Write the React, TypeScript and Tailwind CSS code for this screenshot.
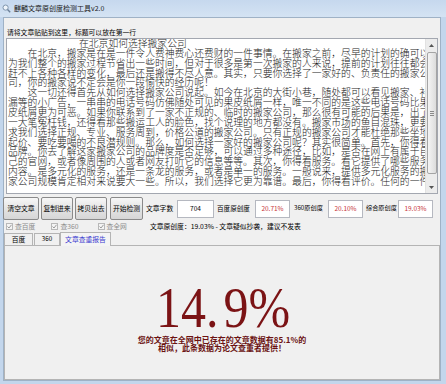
import React from "react";

const lines: string[] = [
  "　　在北京，搬家是在是一件令人费神费心还费财的一件事情。在搬家之前，尽早的计划的确可以",
  "为我们整个的搬家过程节省出一些时间，但对于很多是第一次搬家的人来说，提前的计划往往都会",
  "赶不上各种各样的变化，最后还是搬得不尽人意。其实，只要你选择了一家好的、负责任的搬家公",
  "司，你的搬家说不定会是你一段愉快的经历呢！",
  "　　这一切还得首先从如何选择搬家公司说起。如今在北京的大街小巷，随处都可以看见搬家、补",
  "漏等的小广告，一串串的电话号码仿佛随处可见的果皮纸屑一样，唯一不同的是这些电话号码比果",
  "皮纸屑更为可恶。如果你联系到了一家不正规的、临时的搬家公司，那么很有可能的后果是，出了",
  "一大笔冤枉钱，还得看那些搬运工人的脸色，找个说理的地方都没有。搬家市场的鱼目混珠，更要",
  "求我们选择正规、专业、服务周到，价格公道的搬家公司。只有正规的搬家公司才能杜绝那些坐地",
  "起价、要吃要喝的不良潜规则。那么，如何选择一家好的搬家公司呢？其实很简单。首先，你得看",
  "品牌。你去了解这家搬家公司的品牌度是否足够，可以通过多种途径，比如，是否在网上有属于自",
  "己的官网，或者像周围的人或者网友打听它的信息等等。其次，你得看服务。看它提供了哪些服务",
  "内容。是多元化的服务，还是一条龙的服务，或者是单一的服务。一般说来，提供多元化服务的搬",
  "家公司规模肯定相对来说要大一些。所以，我们选择它更为靠谱。最后，你得看评价。任何的一件",
];

function Btn({ label, w, ml }: { label: string; w: string; ml: string }) {
  return (
    <div
      className={`${w} ${ml} h-[23px] flex items-center justify-center rounded-[2px] border border-[#8a8a8a] bg-[linear-gradient(to_bottom,#f7f7f7,#e4e4e4_50%,#d6d6d6)] text-[6.8px] leading-none whitespace-nowrap`}
    >
      {label}
    </div>
  );
}

function Box({ value, red, w, ml }: { value: string; red?: boolean; w: string; ml: string }) {
  return (
    <div
      className={`${w} ${ml} h-[18px] flex items-center justify-center border border-[#b5b8c0] bg-white text-[6.5px] leading-none ${
        red ? "text-[#c8363a]" : "text-black"
      }`}
    >
      {value}
    </div>
  );
}

function Check({ label, ml }: { label: string; ml: string }) {
  return (
    <div className={`${ml} flex items-center gap-[2px]`}>
      <div className="w-[7px] h-[7px] border border-[#b8b8b8] bg-[#f4f4f4] flex items-center justify-center">
        <svg width="5" height="5" viewBox="0 0 5 5">
          <path d="M0.5 2.5 L2 4 L4.5 0.8" stroke="#9a9a9a" strokeWidth="1" fill="none" />
        </svg>
      </div>
      <span className="text-[6.8px] leading-none text-[#8c8c8c] whitespace-nowrap">{label}</span>
    </div>
  );
}

export default function App() {
  return (
    <div className="w-[446px] h-[384px] overflow-hidden bg-[#c3d6ec] flex flex-col font-['Noto_Sans_CJK_SC',sans-serif] text-black">
      {/* title bar */}
      <div className="h-[17px] flex items-center pl-[2px] bg-[linear-gradient(to_bottom,#c6d8ee,#d4e3f3)]">
        <svg width="9" height="9" viewBox="0 0 9 9">
          <circle cx="3.6" cy="3.6" r="2.6" fill="#eef4fa" stroke="#7f95ad" strokeWidth="1" />
          <path d="M5.5 5.5 L8.2 8.2" stroke="#6d8199" strokeWidth="1.4" />
        </svg>
        <span className="ml-[3px] text-[7px] leading-none text-[#1b1b1b] whitespace-nowrap">
          麒麟文章原创度检测工具v2.0
        </span>
      </div>

      {/* client frame */}
      <div className="ml-[3px] w-[438px] h-[364px] border border-[#9fb2c6] bg-[#f0f0f0] flex flex-col">
        {/* label */}
        <div className="pt-[10px] pl-[3px] h-[18px] text-[6.8px] leading-[8px] whitespace-nowrap">
          请将文章贴贴到这里，标题可以放在第一行
        </div>

        {/* textarea */}
        <div className="mt-[2px] ml-[2px] w-[432px] h-[156px] border border-[#a3a7b0] bg-white flex">
          <div className="w-[418px] pl-[1px] overflow-hidden text-[9.8px] leading-[9.86px] font-light text-[#1a1a1a]">
            <div className="h-[9.86px] pl-[71px] whitespace-nowrap">在北京如何选择搬家公司</div>
            {lines.map((l, i) => (
              <div key={i} className="h-[9.86px] whitespace-nowrap">
                {l}
              </div>
            ))}
          </div>
          <div className="flex-1" />
          <div className="w-[12px] h-full bg-[#ececec] border-l border-[#e2e2e2] flex flex-col items-center">
            <div className="h-[12px] w-full flex items-center justify-center">
              <svg width="5" height="3" viewBox="0 0 5 3">
                <path d="M0 3 L2.5 0 L5 3 Z" fill="#555" />
              </svg>
            </div>
            <div className="mt-[1px] h-[122px] w-[10px] rounded-[2px] border border-[#a4a4a4] bg-[linear-gradient(to_right,#f4f4f4,#dcdcdc)] flex items-center justify-center">
              <div className="flex flex-col gap-[1px]">
                <div className="w-[4px] h-[1px] bg-[#8a8a8a]" />
                <div className="w-[4px] h-[1px] bg-[#8a8a8a]" />
                <div className="w-[4px] h-[1px] bg-[#8a8a8a]" />
              </div>
            </div>
            <div className="flex-1" />
            <div className="h-[12px] w-full flex items-center justify-center">
              <svg width="5" height="3" viewBox="0 0 5 3">
                <path d="M0 0 L2.5 3 L5 0 Z" fill="#555" />
              </svg>
            </div>
          </div>
        </div>

        {/* buttons row */}
        <div className="mt-[3px] h-[23px] flex items-center">
          <Btn label="清空文章" w="w-[36px]" ml="ml-[-1px]" />
          <Btn label="复制进来" w="w-[32px]" ml="ml-[2px]" />
          <Btn label="拷贝出去" w="w-[32px]" ml="ml-[2px]" />
          <Btn label="开始检测" w="w-[33px]" ml="ml-[3px]" />
          <div className="ml-[3px] w-[28px] text-[6.8px] leading-none whitespace-nowrap">文章字数</div>
          <Box value="704" w="w-[37px]" ml="ml-[3px]" />
          <div className="ml-[3px] w-[35px] text-[6.6px] leading-none whitespace-nowrap">百度原创度</div>
          <Box value="20.71%" red w="w-[35px]" ml="ml-[3px]" />
          <div className="ml-[4px] w-[31px] text-[6.2px] leading-none whitespace-nowrap">360原创度</div>
          <Box value="20.10%" red w="w-[35px]" ml="ml-[3px]" />
          <div className="ml-[3px] w-[31px] text-[6.2px] leading-none whitespace-nowrap">综合原创度</div>
          <Box value="19.03%" red w="w-[35px]" ml="ml-[1px]" />
        </div>

        {/* checkbox row */}
        <div className="mt-[2px] h-[8px] flex items-center">
          <Check label="查百度" ml="ml-[2px]" />
          <Check label="查360" ml="ml-[16px]" />
          <Check label="查全网" ml="ml-[19px]" />
          <div className="ml-[23px] text-[6.8px] leading-none whitespace-nowrap">
            文章原创度：19.03% - 文章疑似抄袭，建议不发表
          </div>
        </div>

        {/* tabs */}
        <div className="mt-[2px] h-[13px] flex items-end">
          <div className="w-[29px] h-[12px] border border-b-0 border-[#b4b4b4] bg-[#f0f0f0] flex items-center justify-center text-[6.8px] leading-none">
            百度
          </div>
          <div className="ml-[1px] w-[26px] h-[12px] border border-b-0 border-[#b4b4b4] bg-[#f0f0f0] flex items-center justify-center text-[6.2px] leading-none">
            360
          </div>
          <div className="w-[51px] h-[14px] mb-[-1px] border border-b-0 border-[#b4b4b4] bg-[#f4f4f4] flex items-center justify-center text-[6.8px] leading-none text-[#3a3ad0] relative z-10">
            文章查重报告
          </div>
        </div>

        {/* panel */}
        <div className="flex-1 border border-[#b4b4b4] bg-[#f0f0f0] flex flex-col items-center">
          <div className="mt-[37px] h-[50px] flex items-baseline justify-center text-[50px] leading-[50px] font-['Liberation_Serif',serif] text-[#7b1315] scale-y-[1.12] ml-[2px]">
            <span>14.</span>
            <span className="ml-[5px]">9%</span>
          </div>
          <div className="mt-[3px] text-center font-bold text-[8px] leading-[8px] text-[#6b1212] whitespace-nowrap">
            <div>您的文章在全网中已存在的文章数据有85.1%的</div>
            <div>相似，此条数据为论文查重者提供！</div>
          </div>
        </div>
      </div>
    </div>
  );
}
